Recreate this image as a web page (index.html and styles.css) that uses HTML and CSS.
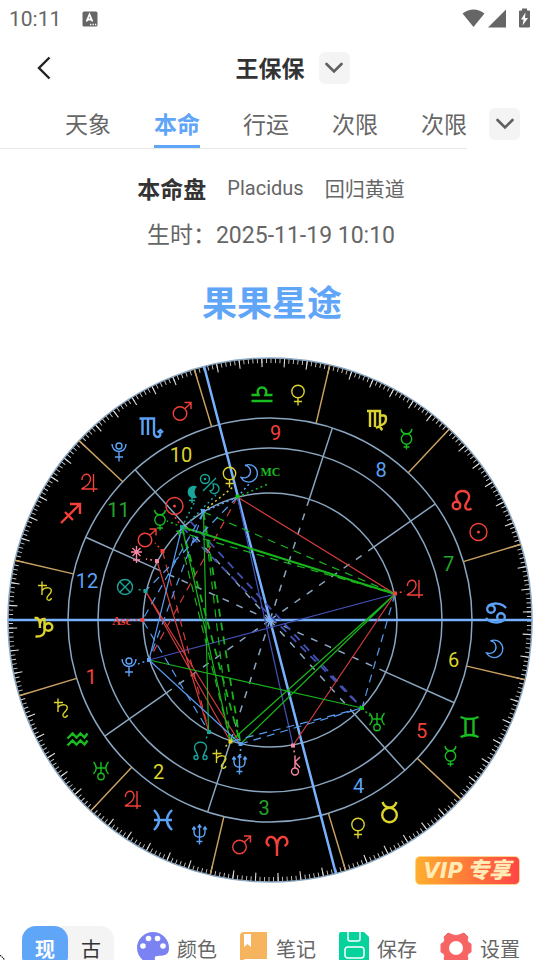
FILE: index.html
```html
<!DOCTYPE html>
<html lang="zh-CN">
<head>
<meta charset="utf-8">
<meta name="viewport" content="width=device-width, initial-scale=1">
<title>本命盘</title>
<link rel="stylesheet" href="styles.css">
</head>
<body>
<div class="app">
  <div class="status">
    <span class="clock">10:11</span>
    <svg class="status-app" viewBox="0 0 16 16" width="16" height="16"><rect x="0.500" y="0.500" width="15" height="15" rx="1.500" fill="#666"/><path d="M4.500 10.500L7.500 3.500L10.500 10.500M5.500 8.500H9.500" fill="none" stroke="#fff" stroke-width="1.800"/><path d="M8 13.500h1.300M10.500 13.500h1.300M13 13.500h1.300" stroke="#fff" stroke-width="1.300"/></svg>
    <svg class="status-right" viewBox="0 0 70 22" width="70" height="22" fill="#666"><path d="M0.500 5.500Q11.500 -2.500 22.500 5.500L11.500 19Z"/><path d="M44 1.500V19.500H26Z"/><path d="M58 2.500h2V0.500h5v2h2a1 1 0 0 1 1 1V18.500a1 1 0 0 1-1 1H58a1 1 0 0 1-1-1V3.500a1 1 0 0 1 1-1Z"/><path d="M63.500 4.500L59 11.500h2.600L60.500 17.500L66 10H63Z" fill="#fff"/></svg>
  </div>

  <header class="header">
    <button class="back" aria-label="返回"><svg viewBox="0 0 16 26" width="16" height="26"><path d="M13.500 2.500L3 13L13.500 23.500" fill="none" stroke="#222" stroke-width="2.400"/></svg></button>
    <h1 class="name">王保保</h1>
    <button class="drop" aria-label="切换档案"><svg viewBox="0 0 18 12" width="18" height="12"><path d="M1.500 2L9 9.500L16.500 2" fill="none" stroke="#606060" stroke-width="2.600" stroke-linecap="round"/></svg></button>
  </header>

  <div class="tabbar">
    <nav class="tabs">
      <a class="tab" href="#sky">天象</a>
      <a class="tab active" href="#natal">本命</a>
      <a class="tab" href="#transit">行运</a>
      <a class="tab" href="#prog">次限</a>
      <a class="tab" href="#prog2">次限</a>
    </nav>
    <button class="drop" aria-label="更多"><svg viewBox="0 0 18 12" width="18" height="12"><path d="M1.500 2L9 9.500L16.500 2" fill="none" stroke="#606060" stroke-width="2.600" stroke-linecap="round"/></svg></button>
  </div>

  <main class="main">
    <div class="kind"><h2>本命盘</h2><span class="latin">Placidus</span><span>回归黄道</span></div>
    <p class="birth">生时：2025-11-19 10:10</p>
    <p class="brand">果果星途</p>

    <div class="chart-wrap">
    <svg class="chart" viewBox="0 350 540 540" role="img" aria-label="本命盘">
      <defs>
        <g id="sun"><circle r="8.500"/><circle r="0.800"/></g>
        <g id="moon"><path d="M-4.500 -7.500A8.700 8.700 0 1 1 -8.500 4.500C-3 6 1 3 1 -1.500C1 -5 -1.500 -7.500 -4.500 -7.500Z"/></g>
        <g id="mercury"><circle cy="0" r="5.200"/><path d="M-5.500 -10Q-4.500 -5.200 0 -5.200T5.500 -10M0 5.200V10.500M-3 8H3"/></g>
        <g id="venus"><circle cy="-3.500" r="6.200"/><path d="M0 2.700V10.500M-4 6.500H4"/></g>
        <g id="mars"><circle cx="-2" cy="2" r="6.800"/><path d="M3 -3L9 -8.500M2.500 -9H9V-2.500"/></g>
        <g id="jupiter"><path d="M-7.500 -3C-8 -10 1.500 -11 1 -3.500C0.500 1 -5 4.500 -8 6H8M4 -9V9"/></g>
        <g id="saturn"><path d="M-8 -5.500H1M-4 -9.500V4M-4 -0.500C-1 -4.500 7 -4 5 1C4 4 0 5 1 8C2.500 10.500 5 9 5.500 7"/></g>
        <g id="uranus"><path d="M-7.500 -9Q-2 -3 -7.500 3M7.500 -9Q2 -3 7.500 3M-5 -3H5M0 -9V2.500"/><circle cy="5.500" r="3.200"/></g>
        <g id="neptune"><path d="M-5.500 -7V-3C-5.500 4 5.500 4 5.500 -3V-7M0 -9V9.500M-3 6.500H3M-7.200 -5.500L-5.500 -8L-3.800 -5.500M7.200 -5.500L5.500 -8L3.800 -5.500M-1.800 -7.500L0 -10L1.800 -7.500"/></g>
        <g id="pluto"><circle cy="-6" r="3"/><path d="M-7 -8C-7 2 7 2 7 -8M0 -0.500V9.500M-4 5H4"/></g>
        <g id="node"><circle cx="-4.500" cy="6.500" r="2"/><circle cx="4.500" cy="6.500" r="2"/><path d="M-3 5C-3.500 1 -6 0 -6 -3.500C-6 -10.500 6 -10.500 6 -3.500C6 0 3.500 1 3 5"/></g>
        <g id="chiron"><circle cy="5.500" r="3.500"/><path d="M0 2V-10M5 -9L0 -4L5 1.500"/></g>

        <g id="libra"><path d="M-10.500 1H-3.500C-8 -9 8 -9 3.500 1H10.500M-10.500 7H10.500"/></g>
        <g id="virgo"><path d="M-10 -9H-7V7M-7 -9H-2V7M-2 -9H3V5Q3 8.500 5.500 10M3 -4.500H6.500Q9 -4.500 9 -1.500Q9 3 5.500 4.500L-1 8"/></g>
        <g id="leo"><circle cx="-5.500" cy="4.500" r="3.800"/><path d="M-3.500 1.500C-9 -6 -4 -10 0.500 -10C7 -10 9 -4 5 1C1.500 6 4 11 9.500 7.500"/></g>
        <g id="cancer"><circle cx="-5" cy="-4" r="3.800"/><circle cx="5" cy="4" r="3.800"/><path d="M-8 -7C-3 -11 6 -10 10 -5M8 7C3 11 -6 10 -10 5"/></g>
        <g id="gemini"><path d="M-9 -10Q0 -6 9 -10M-9 10Q0 6 9 10M-4 -8V8M4 -8V8"/></g>
        <g id="taurus"><circle cy="3" r="7.300"/><path d="M-7 -10Q-5 -4.300 0 -4.300T7 -10"/></g>
        <g id="aries"><path d="M-7.500 0C-13 -3 -9.500 -10 -5 -9C-1 -8 0 -4 0 2V10M7.500 0C13 -3 9.500 -10 5 -9C1 -8 0 -4 0 2"/></g>
        <g id="pisces"><path d="M-9 -10Q1 0 -9 10M9 -10Q-1 0 9 10M-9 0H9"/></g>
        <g id="aquarius"><path d="M-10 -1L-5 -6L-1 -2L3 -6L7 -2L10 -6M-10 6L-5 1L-1 5L3 1L7 5L10 1"/></g>
        <g id="capricorn"><path d="M-9.500 -9H-7Q-4 -8 -4 1M-4 -3Q-3 -9 0.500 -8V4Q0 10 -8.500 9.500"/><circle cx="4.500" cy="0" r="3.800"/></g>
        <g id="sagittarius"><path d="M-10 10L9 -9M-1 -9H9V1M-6 -1L2 7"/></g>
        <g id="scorpio"><path d="M-11 -8.500H-8V8M-8 -8.500H-2.500V8M-2.500 -8.500H3.500V5Q3.500 10 7.500 10Q10 10 10 5M7 5.500L10 3L12.500 5.500"/></g>
      </defs>

      <circle class="disc" cx="270" cy="620" r="262"/>
      <circle class="ticks" cx="270" cy="620" r="259.500" pathLength="360" transform="rotate(3.100 270 620)"/>
      <circle class="ticks long" cx="270" cy="620" r="257.500" pathLength="360" transform="rotate(3.080 270 620)"/>
      <g class="ring">
        <circle cx="270" cy="620" r="262"/><circle cx="270" cy="620" r="202"/><circle cx="270" cy="620" r="172"/><circle cx="270" cy="620" r="127"/>
      </g>

      <g class="bounds" transform="translate(270 620) rotate(-16.800)">
        <path d="M202 0H262M-202 0H-262M0 202V262M0 -202V-262"/>
        <path transform="rotate(30)" d="M202 0H262M-202 0H-262M0 202V262M0 -202V-262"/>
        <path transform="rotate(60)" d="M202 0H262M-202 0H-262M0 202V262M0 -202V-262"/>
      </g>

      <g transform="translate(270 620)">
        <g class="cusp"><path transform="rotate(-72)" d="M127 0H202M-127 0H-202"/><path transform="rotate(-35.100)" d="M127 0H202M-127 0H-202"/><path transform="rotate(24.200)" d="M127 0H202M-127 0H-202"/><path transform="rotate(48.100)" d="M127 0H202M-127 0H-202"/></g>
        <g class="cusp-in"><path transform="rotate(-72)" d="M0 0H127M0 0H-127"/><path transform="rotate(-35.100)" d="M0 0H127M0 0H-127"/><path transform="rotate(24.200)" d="M0 0H127M0 0H-127"/><path transform="rotate(48.100)" d="M0 0H127M0 0H-127"/></g>
      </g>
      <path class="axis" d="M7.500 620H532.500M204 366L336 874"/>

      <g class="aspects">
        <path class="indigo" d="M237.500 497L293 745.500M395 594L149 660"/>
        <path class="indigo dash wide" d="M182 527L362 708M190 521L362 708"/>
        <path class="red" d="M237.500 497L395 594L293 745.500M145.500 591L230.500 741.500M145.500 591L240.500 744M157 561L209 732"/>
        <path class="red dash" d="M237.500 497L149 660M162.500 551L209 732"/>
        <path class="green" d="M395 594L240.500 744M395 594L230.500 741.500M149 660L362 708M203.500 512L208.500 732M182 527L230.500 741.500"/>
        <path class="green bold" d="M182 527L395 594"/>
        <path class="green dash wide" d="M182 527L240.500 744M203.500 512L240.500 744"/>
        <path class="green dash" d="M203.500 512L395 594M176 531L395 594M178 530L230.500 741.500M203.500 512L230.500 741.500"/>
        <path class="blue" d="M182 527L149 660L240.500 744"/>
        <path class="blue dash" d="M237.500 497L145.500 591M203.500 512L142.500 620L209 732M203.500 512L149 660M395 594L362 708L240.500 744M362 708L230.500 741.500"/>
      </g>

      <g class="leaders">
        <path class="c-g" d="M237.500 497L268 484"/><path class="c-b" d="M237.500 497L203 512M237.500 497L250 483"/><path class="c-y" d="M203.500 511L233 487M230.500 741.500L224 748"/><path class="c-t" d="M190 521L216 495M182 527L194 503M145.500 591L136 589M209 732L205 741"/><path class="c-r" d="M182 527L174 516M162.500 551L155 543M142.500 620H132M395 594L405 591"/><path class="c-p" d="M157 561L146 559M293 745.500L295 756"/><path class="c-b" d="M149 660L138 664M240.500 744V755"/><path class="c-g" d="M362 708L370 716M182 527L167 521"/>
      </g>
      <g class="points">
        <rect class="f-g" x="235.500" y="494.500" width="4" height="4"/><rect class="f-b" x="201" y="509" width="4" height="4"/><rect class="f-t" x="180" y="525" width="4" height="4"/><rect class="f-r" x="160.500" y="549" width="4" height="4"/><rect class="f-p" x="155" y="559" width="4" height="4"/><rect class="f-t" x="143.500" y="589" width="4" height="4"/><rect class="f-r" x="140.500" y="618" width="4" height="4"/><rect class="f-b" x="147" y="658" width="4" height="4"/><rect class="f-t" x="207" y="730" width="4" height="4"/><rect class="f-y" x="228.500" y="739.500" width="4" height="4"/><rect class="f-b" x="238.500" y="742" width="4" height="4"/><rect class="f-p" x="291" y="743.500" width="4" height="4"/><rect class="f-g" x="360" y="706" width="4" height="4"/><rect class="f-r" x="393" y="591.500" width="4" height="4"/>
      </g>

      <g class="signs">
        <use href="#libra" x="262" y="394" class="c-g"/><use href="#virgo" x="377" y="420" class="c-y"/><use href="#leo" x="462" y="501" class="c-r"/><use href="#cancer" x="496" y="613" class="c-b"/><use href="#gemini" x="469.500" y="727" class="c-g"/><use href="#taurus" x="389.500" y="812" class="c-y"/><use href="#aries" x="277" y="846" class="c-r"/><use href="#pisces" x="163" y="820" class="c-b"/><use href="#aquarius" x="77.500" y="739.500" class="c-g"/><use href="#capricorn" x="44" y="627" class="c-y"/><use href="#sagittarius" x="71" y="513" class="c-r"/><use href="#scorpio" x="150.500" y="427" class="c-b"/>
      </g>
      <g class="planets">
        <use href="#venus" x="298" y="395" class="c-y"/><use href="#mercury" x="406.500" y="439" class="c-g"/><use href="#sun" x="478.500" y="532" class="c-r"/><use href="#moon" x="495" y="648.500" class="c-b"/><use href="#mercury" x="450.500" y="756" class="c-g"/><use href="#venus" x="358" y="828" class="c-y"/><use href="#mars" x="241.500" y="845" class="c-r"/><use href="#neptune" x="199.500" y="835" class="c-b"/><use href="#jupiter" x="133" y="800" class="c-r"/><use href="#uranus" x="101" y="771" class="c-g"/><use href="#saturn" x="62" y="708" class="c-y"/><use href="#saturn" x="46" y="591" class="c-y"/><use href="#jupiter" x="89.500" y="483" class="c-r"/><use href="#pluto" x="119" y="452" class="c-b"/><use href="#mars" x="182" y="411.500" class="c-r"/>
        <use href="#moon" x="249.500" y="473" class="c-b"/><use href="#venus" x="229.500" y="477" class="c-y"/><use href="#sun" x="174.500" y="506" class="c-r"/><use href="#mercury" x="160" y="520" class="c-g"/><use href="#mars" x="147" y="538" class="c-r"/><use href="#pluto" x="129" y="667" class="c-b"/><use href="#node" x="200.500" y="751" class="c-t"/><use href="#saturn" x="220.500" y="759" class="c-y"/><use href="#neptune" x="239.500" y="765" class="c-b"/><use href="#chiron" x="295" y="766" class="c-p"/><use href="#uranus" x="377" y="722" class="c-g"/><use href="#jupiter" x="415" y="589" class="c-r"/>
        <g class="c-t"><circle cx="205" cy="479" r="4.500"/><circle cx="205" cy="479" r="0.600"/><path d="M203 491L216 478M213 484A4.800 4.800 0 1 1 210 491Q215 490 213 484Z"/></g>
        <path class="f-t" d="M197 486.500A6.300 6.300 0 1 0 197 497.500Q192 492 197 486.500Z"/><path class="c-t" d="M192 498V503M189 500.500H195"/>
        <g class="c-t"><circle cx="125" cy="587" r="7.500"/><path d="M120 582L130 592M130 582L120 592"/></g>
        <path class="c-p" d="M136.500 546V563M131 552H142M132.500 548L140.500 556M140.500 548L132.500 556M133 560H140"/>
      </g>
      <g class="angles"><text class="f-r" x="121.500" y="625">Asc</text><text class="f-g" x="270.500" y="476">MC</text></g>
      <g class="houses">
        <text class="f-r" x="91" y="684">1</text><text class="f-y" x="158.500" y="779">2</text><text class="f-g2" x="264" y="815">3</text><text class="f-b" x="358.500" y="793">4</text><text class="f-r" x="421.500" y="738">5</text><text class="f-y" x="453.500" y="667">6</text><text class="f-g2" x="448.500" y="571">7</text><text class="f-b" x="381" y="477">8</text><text class="f-r" x="275.500" y="440">9</text><text class="f-y" x="181" y="462">10</text><text class="f-g2" x="118.500" y="517">11</text><text class="f-b" x="87" y="588">12</text>
      </g>
    </svg>
    <button class="vip"><i>VIP</i>专享</button>
    </div>
  </main>

  <footer class="toolbar">
    <div class="toggle"><button class="on">现</button><button>古</button></div>
    <button class="tool"><svg viewBox="0 0 32 32" width="32" height="32"><path d="M16 0A16 16 0 0 0 0 16C0 25 8 32 16 32C20 32 17 27 18 25C20 22 32 27 32 16A16 16 0 0 0 16 0Z" fill="#7b83f3"/><g fill="#fff"><circle cx="6" cy="14" r="2.800"/><circle cx="11.500" cy="6.500" r="2.800"/><circle cx="20.500" cy="6.500" r="2.800"/><circle cx="26" cy="14" r="2.800"/></g></svg>颜色</button>
    <button class="tool"><svg viewBox="0 0 28 32" width="28" height="32"><path d="M4 0H27V32H0V4Q0 0 4 0Z" fill="#f6b45f"/><path d="M4 2H11V15L7.500 12L4 15Z" fill="#fff"/><path d="M3 32Q2 27 6 27H27V32Z" fill="#fff"/></svg>笔记</button>
    <button class="tool"><svg viewBox="0 0 30 32" width="30" height="32"><path d="M2 0H25L30 5V32H0V2Q0 0 2 0Z" fill="#06d29b"/><path d="M9 0V7Q9 9 11 9H19Q21 9 21 7V0" fill="none" stroke="#fff" stroke-width="1.500"/><rect x="6" y="15" width="19" height="11" rx="3" fill="none" stroke="#fff" stroke-width="1.500"/></svg>保存</button>
    <button class="tool"><svg viewBox="0 0 32 32" width="32" height="32"><path d="M8 1L13 3Q16 4 19 3L24 1L28 5Q26 10 31 12V20Q26 22 28 27L24 31L19 29Q16 28 13 29L8 31L4 27Q6 22 1 20V12Q6 10 4 5Z" fill="#f76464" stroke="#f76464" stroke-linejoin="round"/><circle cx="16" cy="16" r="7" fill="#fff"/></svg>设置</button>
  </footer>
  <svg class="corner" viewBox="0 0 5 5" width="5" height="5"><path d="M0 0L5 5" fill="none" stroke="#111" stroke-width="1.200" stroke-dasharray="1.500 0.800"/></svg>
</div>
</body>
</html>
```
FILE: styles.css
```css
* { box-sizing: border-box; }
body { margin: 0; background: #fff; color: #666; font-family: Roboto, "Noto Sans CJK SC", sans-serif; }
h1, h2, p { margin: 0; }
button { border: 0; padding: 0; background: none; font: inherit; color: inherit; }
svg { display: block; }

.app { position: relative; display: flex; flex-direction: column; height: 100vh; overflow: hidden; }
.status { display: flex; align-items: center; flex: none; height: 37px; padding: 0 8px 0 9px; }
.clock { font-size: 21px; }
.status-app { margin-left: 21px; }
.status-right { margin-left: auto; }

.header { position: relative; display: flex; align-items: center; justify-content: center; flex: none; height: 62px; gap: 14px; padding-left: 45px; }
.back { position: absolute; left: 36px; top: 18px; }
.name { padding-top: 3px; font-size: 23px; line-height: 32px; font-weight: 700; color: #333; }
.drop { display: flex; align-items: center; justify-content: center; width: 31px; height: 32px; border-radius: 6px; background: #f4f4f4; flex: none; }

.tabbar { display: flex; flex: none; align-items: center; height: 50px; padding-right: 20px; gap: 22px; }
.tabs { display: flex; flex: 1; align-self: stretch; justify-content: flex-end; gap: 43px; border-bottom: 1px solid #e8e8e8; }
.tab { padding-top: 5px; font-size: 23px; line-height: 44px; color: #666; text-decoration: none; }
.tab.active { color: #5fa5f8; font-weight: 700; border-bottom: 3px solid #5fa5f8; }

.main { flex: none; text-align: center; }
.kind { display: flex; align-items: center; justify-content: center; gap: 21px; height: 32px; margin-top: 23px; padding-left: 2px; font-size: 20px; }
.kind h2 { font-size: 23px; color: #333; }
.birth { margin-top: 16px; padding-left: 2px; font-size: 23px; line-height: 32px; }
.brand { margin-top: 29px; padding-left: 4px; font-size: 35px; line-height: 48px; font-weight: 700; color: #5fa5f8; }

.chart-wrap { position: relative; margin-top: 21px; }
.chart { width: 100%; }
.chart circle, .chart path { fill: none; }
.chart .disc { fill: #000; }
.ticks { stroke: #ccc; stroke-width: 5; stroke-dasharray: 0.2 0.8; }
.ticks.long { stroke-width: 9; stroke: #ddd; stroke-dasharray: 0.24 4.76; }
.ring { stroke: #8aa6c0; stroke-width: 1.5; }
.bounds { stroke: #c8a061; stroke-width: 1.5; }
.cusp { stroke: #8aa6c0; stroke-width: 1.5; }
.cusp-in { stroke: #8aa6c0; stroke-width: 1.5; stroke-dasharray: 7 8; }
.axis { stroke: #78b2ff; stroke-width: 2.5; }
.aspects { stroke-width: 1.2; }
.indigo { stroke: #4450b4; }
.red { stroke: #d63c3c; }
.green { stroke: #18b41c; }
.blue { stroke: #559bee; }
.bold { stroke-width: 2; }
.dash { stroke-dasharray: 8 6; }
.wide { stroke-width: 1.8; }
.leaders { stroke-width: 1.5; stroke-dasharray: 2 3; }
.signs { stroke-width: 2.4; }
.planets { stroke-width: 1.4; }
.c-r { stroke: #f3403a; }
.c-g { stroke: #18bd20; }
.c-y { stroke: #dcd42c; }
.c-b { stroke: #5ba2f6; }
.c-t { stroke: #1aa59a; }
.c-p { stroke: #fa87a5; }
.f-r { fill: #f3403a; }
.f-g { fill: #18bd20; }
.f-g2 { fill: #23a52d; }
.f-y { fill: #dcd42c; }
.f-b { fill: #5ba2f6; }
.chart .f-t { fill: #1aa59a; }
.f-p { fill: #fa87a5; }
.houses { font-size: 20px; text-anchor: middle; }
.angles { font: 700 12px "Liberation Serif", serif; text-anchor: middle; }

.vip { position: absolute; right: 20px; bottom: 5px; height: 29px; padding: 0 8px; border: 1px solid #fbd58b; border-radius: 5px; background: linear-gradient(90deg, #ffae2e, #ff4545); color: #ffebb5; font-size: 22px; line-height: 26px; font-weight: 900; font-style: italic; }
.vip i { margin-right: 4px; font-family: "DejaVu Sans", sans-serif; font-size: 21px; font-weight: 700; }

.toolbar { display: flex; flex: none; align-items: center; justify-content: space-between; margin-top: 36px; padding: 0 20px 0 22px; height: 44px; }
.toggle { display: flex; border-radius: 14px; background: #f4f4f4; color: #333; }
.toggle button { width: 46px; height: 44px; font-size: 20px; border-radius: 14px; }
.toggle .on { background: #5fa5f8; color: #fff; font-weight: 700; }
.tool { display: flex; align-items: center; gap: 8px; font-size: 20px; }
.corner { position: absolute; left: 0; bottom: 0; }
```
